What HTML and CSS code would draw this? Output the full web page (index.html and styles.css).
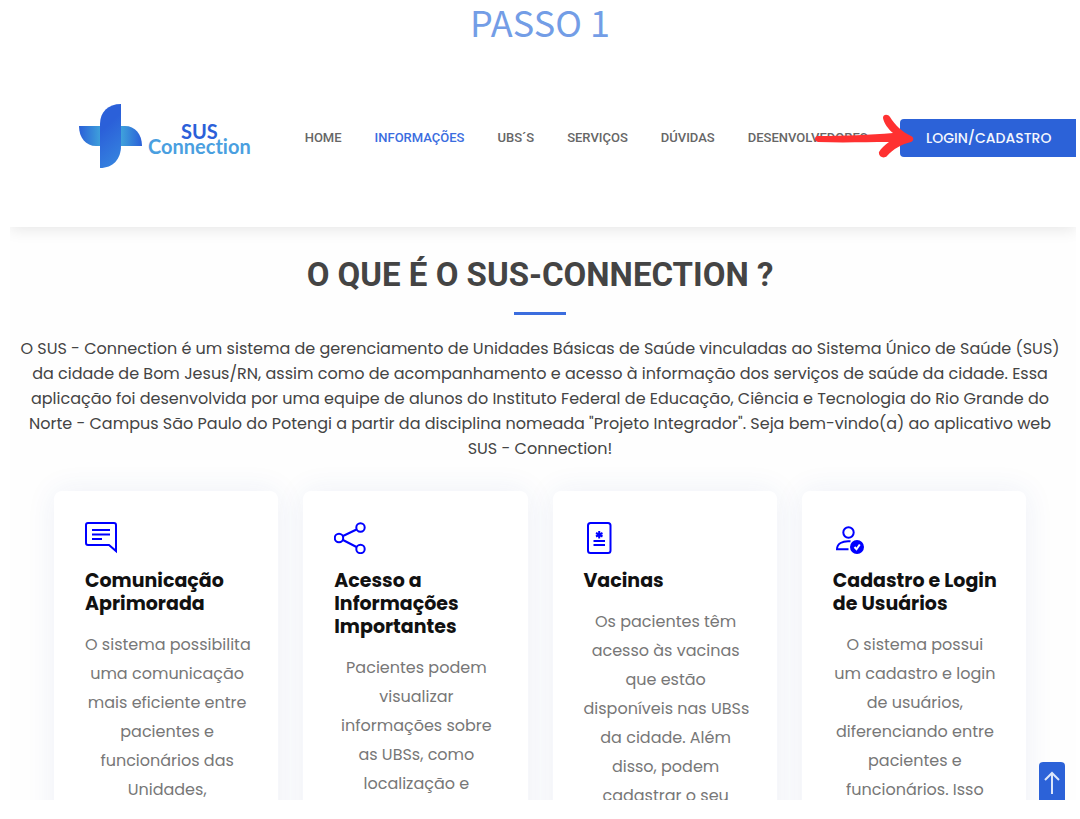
FILE: index.html
```html
<!DOCTYPE html>
<html lang="pt-BR">
<head>
<meta charset="utf-8">
<meta name="viewport" content="width=device-width, initial-scale=1">
<title>SUS Connection</title>
<link rel="stylesheet" href="styles.css">
</head>
<body>
<h1 class="step">PASSO 1</h1>
<div class="frame">
  <header class="header">
    <a class="logo" href="#home">
      <svg class="logo-mark" viewBox="0 0 64 64" aria-hidden="true">
        <defs>
          <linearGradient id="left"><stop offset="0" stop-color="#2a5fd8"/><stop offset="1" stop-color="#3fa2db"/></linearGradient>
          <linearGradient id="right"><stop offset="0" stop-color="#3fa2db"/><stop offset="1" stop-color="#2a5fd8"/></linearGradient>
          <linearGradient id="bar" x1="0" y1="0" x2="0.3" y2="1"><stop offset="0.4" stop-color="#2b60d9"/><stop offset="1" stop-color="#347fde"/></linearGradient>
        </defs>
        <path fill="url(#left)" d="M0 22H22V42H17C7 42 0 34 0 22Z"/>
        <path fill="url(#right)" d="M42 22H46C56 22 63 30 63 42H42Z"/>
        <path fill="url(#bar)" d="M42 0V42C42 55 34 64 21 64V20C21 8 29 0 42 0Z"/>
      </svg>
      <span class="logo-text"><span class="logo-sus">SUS</span><span class="logo-con">Connection</span></span>
    </a>
    <nav class="nav">
      <a href="#home">HOME</a>
      <a class="active" href="#info">INFORMAÇÕES</a>
      <a href="#ubs">UBS´S</a>
      <a href="#servicos">SERVIÇOS</a>
      <a href="#duvidas">DÚVIDAS</a>
      <a href="#dev">DESENVOLVEDORES</a>
    </nav>
    <div class="login-wrap">
      <a class="login" href="#login">LOGIN/CADASTRO</a>
      <svg class="arrow" viewBox="0 0 100 44" aria-hidden="true">
        <path fill="#ff3131" d="M4 22C30 22 56 21 79 19C74 15 70 9 69 4C69 0 74 0 76 3C81 11 88 18 97 22C100 23 100 27 97 28C88 30 79 35 73 42C70 45 64 43 65 38C67 34 71 31 75 28C52 28 30 29 4 28C0 27 0 22 4 22Z"/>
      </svg>
    </div>
  </header>
  <main class="content" id="info">
    <h2 class="title">O QUE É O SUS-CONNECTION ?</h2>
    <p class="intro">O SUS - Connection é um sistema de gerenciamento de Unidades Básicas de Saúde vinculadas ao Sistema Único de Saúde (SUS)<br>da cidade de Bom Jesus/RN, assim como de acompanhamento e acesso à informação dos serviços de saúde da cidade. Essa<br>aplicação foi desenvolvida por uma equipe de alunos do Instituto Federal de Educação, Ciência e Tecnologia do Rio Grande do<br>Norte - Campus São Paulo do Potengi a partir da disciplina nomeada "Projeto Integrador". Seja bem-vindo(a) ao aplicativo web<br>SUS - Connection!</p>
    <div class="cards">
      <article class="card">
        <svg class="icon" viewBox="0 0 32 32" aria-hidden="true"><path d="M3 1H29Q31 1 31 3V29L24 23H3Q1 23 1 21V3Q1 1 3 1ZM7 8H25M7 12.500H25M7 17H17"/></svg>
        <h3>Comunicação<br>Aprimorada</h3>
        <p>O sistema possibilita<br>uma comunicação<br>mais eficiente entre<br>pacientes e<br>funcionários das<br>Unidades,</p>
      </article>
      <article class="card">
        <svg class="icon" viewBox="0 0 32 32" aria-hidden="true"><circle cx="5" cy="16" r="4.200"/><circle cx="26.500" cy="5.500" r="4.200"/><circle cx="26.500" cy="27" r="4.200"/><path d="M9 14L22.500 7.500M9 18L22.500 25"/></svg>
        <h3>Acesso a<br>Informações<br>Importantes</h3>
        <p>Pacientes podem<br>visualizar<br>informações sobre<br>as UBSs, como<br>localização e</p>
      </article>
      <article class="card">
        <svg class="icon" viewBox="0 0 32 32" aria-hidden="true"><rect x="4" y="1" width="22.500" height="30" rx="2.500"/><path d="M9.500 19H21M9.500 23H21M15.200 9V16.500M12 11L18.500 14.500M18.500 11L12 14.500"/></svg>
        <h3>Vacinas</h3>
        <p>Os pacientes têm<br>acesso às vacinas<br>que estão<br>disponíveis nas UBSs<br>da cidade. Além<br>disso, podem<br>cadastrar o seu</p>
      </article>
      <article class="card">
        <svg class="icon" viewBox="0 0 32 32" aria-hidden="true"><circle cx="15.500" cy="10.500" r="5.200"/><path d="M17.500 19.300C9 18.500 4 22 4 27.200H15.500"/><circle cx="24" cy="25" r="6" fill="#00f"/><path class="tick" d="M21.500 25L23.500 27.200L26.800 22.500"/></svg>
        <h3>Cadastro e Login<br>de Usuários</h3>
        <p>O sistema possui<br>um cadastro e login<br>de usuários,<br>diferenciando entre<br>pacientes e<br>funcionários. Isso</p>
      </article>
    </div>
  </main>
  <a class="to-top" href="#home" aria-label="Voltar ao topo">
    <svg viewBox="0 0 16 24" aria-hidden="true"><path d="M8 23V2M1 9L8 2L15 9"/></svg>
  </a>
</div>
</body>
</html>
```

FILE: styles.css
```css
* { box-sizing: border-box; }
body {
  margin: 0;
  height: 100vh;
  display: flex;
  flex-direction: column;
  background: #fff;
  color: #444;
  font-family: Poppins, Inter, sans-serif;
}
a { text-decoration: none; color: inherit; }
h1, h2, h3, p { margin: 0; }
.step {
  font: 400 36px/42px "Noto Sans CJK SC", sans-serif;
  padding-bottom: 6px;
  color: #739de6;
  text-align: center;
}
.frame {
  position: relative;
  flex: 1;
  min-height: 0;
  margin: 0 4px 19px 10px;
  overflow: hidden;
  background: #fefefe;
}
.header {
  display: flex;
  align-items: center;
  padding: 56px 0 55px 69px;
  background: #fff;
  box-shadow: 0 2px 15px rgba(0, 0, 0, 0.1);
}
.logo {
  display: flex;
  align-items: center;
  gap: 5px;
  padding-bottom: 4px;
}
.logo-mark { width: 64px; height: 64px; }
.logo-text {
  display: flex;
  flex-direction: column;
  align-items: center;
  font: 700 20px/15px Lato, sans-serif;
  font-variant-ligatures: none;
  padding-top: 6px;
}
.logo-sus { color: #2b60d9; }
.logo-con { color: #4a9fe0; }
.nav {
  display: flex;
  flex: 1;
  gap: 33px;
  min-width: 0;
  margin-left: 54px;
  font: 500 13px/20px Roboto, sans-serif;
  color: #666;
  white-space: nowrap;
}
.nav .active { color: #3b6de0; }
.login-wrap { position: relative; }
.login {
  display: block;
  width: 176px;
  padding-left: 26px;
  border-radius: 4px 0 0 4px;
  background: #2c62d8;
  color: #f4f7fd;
  font-size: 14px;
  font-weight: 500;
  line-height: 38px;
  white-space: nowrap;
}
.arrow {
  position: absolute;
  left: -86px;
  top: -5px;
  width: 100px;
  height: 44px;
}
.content {
  display: flex;
  flex-direction: column;
  align-items: center;
  padding: 28px 6px 0 0;
}
.title {
  font: 700 33px/40px Roboto, sans-serif;
  padding-bottom: 21px;
  display: flex;
  flex-direction: column;
  align-items: center;
  gap: 17px;
  white-space: nowrap;
}
.title::after {
  content: "";
  width: 52px;
  height: 3px;
  background: #3b6dde;
}
.intro {
  font-size: 16px;
  line-height: 25px;
  text-align: center;
  white-space: nowrap;
}
.cards {
  display: grid;
  grid-template-columns: repeat(4, minmax(0, 1fr));
  gap: 25px;
  align-self: stretch;
  padding: 30px 44px 0;
}
.card {
  padding: 31px 29px 31px 31px;
  border-radius: 8px;
  background: #fff;
  box-shadow: 0 0 30px rgba(40, 80, 160, 0.08);
  white-space: nowrap;
}
.icon {
  display: block;
  width: 32px;
  height: 32px;
  margin-bottom: 15px;
  fill: none;
  stroke: #00f;
  stroke-width: 2;
}
.icon .tick { stroke: #fff; }
.card h3 {
  color: #111;
  font-size: 19px;
  font-weight: 700;
  line-height: 23px;
  margin-bottom: 15px;
}
.card p {
  font-size: 16px;
  line-height: 29px;
  color: #777;
  text-align: center;
}
.to-top {
  position: absolute;
  right: 11px;
  bottom: 0;
  width: 26px;
  height: 38px;
  padding: 9px 5px;
  border-radius: 4px 4px 0 0;
  background: #2c62d8;
}
.to-top svg {
  display: block;
  width: 16px;
  height: 24px;
  fill: none;
  stroke: #dce6fa;
  stroke-width: 2;
}
```
